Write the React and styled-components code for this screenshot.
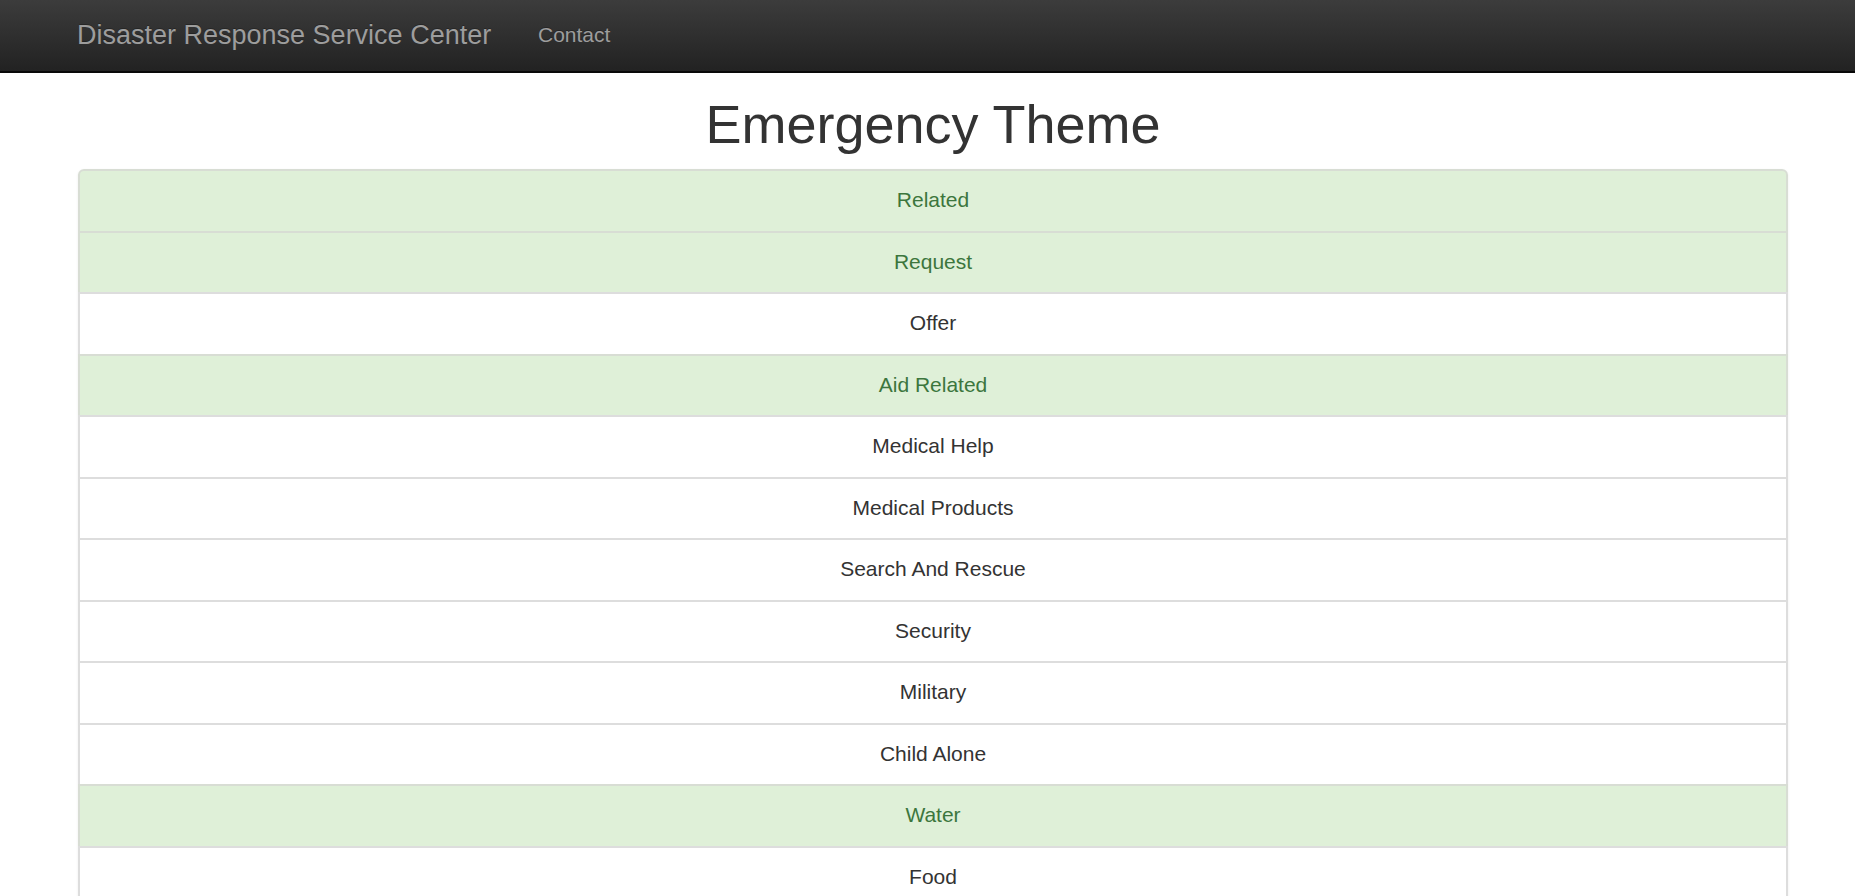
import React from "react";
import styled, { createGlobalStyle } from "styled-components";

const GlobalStyle = createGlobalStyle`
  html, body {
    margin: 0;
    padding: 0;
    background: #ffffff;
  }
  body {
    font-family: "Liberation Sans", Arial, Helvetica, sans-serif;
    font-size: 21px;
    line-height: 30px;
    color: #333333;
  }
  * { box-sizing: border-box; }
`;

const Navbar = styled.nav`
  height: 73px;
  background: linear-gradient(to bottom, #3c3c3c 0%, #222222 100%);
  border-bottom: 2px solid #080808;
  display: flex;
  align-items: flex-start;
  padding: 20px 0 0 77px;
`;

const Brand = styled.a`
  display: block;
  width: 461px;
  font-size: 27px;
  line-height: 30px;
  color: #9d9d9d;
  text-decoration: none;
  text-shadow: 0 -1px 0 rgba(0, 0, 0, 0.25);
  white-space: nowrap;
`;

const NavLink = styled.a`
  display: block;
  font-size: 21px;
  line-height: 30px;
  color: #9d9d9d;
  text-decoration: none;
  text-shadow: 0 -1px 0 rgba(0, 0, 0, 0.25);
`;

const Container = styled.main`
  width: 1710px;
  margin-left: 78px;
`;

const Title = styled.h1`
  margin: 22px 0 15px;
  font-size: 54px;
  line-height: 59px;
  font-weight: 400;
  text-align: center;
  color: #333333;
`;

const List = styled.ul`
  list-style: none;
  margin: 0;
  padding: 0;
  border-radius: 6px;
  box-shadow: 0 1.5px 3px rgba(0, 0, 0, 0.075);
`;

const Item = styled.li`
  padding: 14px 22px 15.5px;
  margin-bottom: -2px;
  border: 2px solid ${(p) => (p.$success ? "#d8ddd4" : "#dddddd")};
  background: ${(p) => (p.$success ? "#dff0d8" : "#ffffff")};
  color: ${(p) => (p.$success ? "#3c763d" : "#333333")};
  font-size: 21px;
  line-height: 30px;
  text-align: center;

  &:first-child {
    border-top-left-radius: 6px;
    border-top-right-radius: 6px;
  }
`;

const categories = [
  ["Related", true],
  ["Request", true],
  ["Offer", false],
  ["Aid Related", true],
  ["Medical Help", false],
  ["Medical Products", false],
  ["Search And Rescue", false],
  ["Security", false],
  ["Military", false],
  ["Child Alone", false],
  ["Water", true],
  ["Food", false],
  ["Shelter", false],
  ["Clothing", false],
  ["Money", false],
  ["Missing People", false],
  ["Refugees", false],
  ["Death", false],
];

export default function App() {
  return (
    <>
      <GlobalStyle />
      <Navbar>
        <Brand href="#">Disaster Response Service Center</Brand>
        <NavLink href="#">Contact</NavLink>
      </Navbar>
      <Container>
        <Title>Emergency Theme</Title>
        <List>
          {categories.map(([name, ok]) => (
            <Item key={name} $success={ok}>
              {name}
            </Item>
          ))}
        </List>
      </Container>
    </>
  );
}
